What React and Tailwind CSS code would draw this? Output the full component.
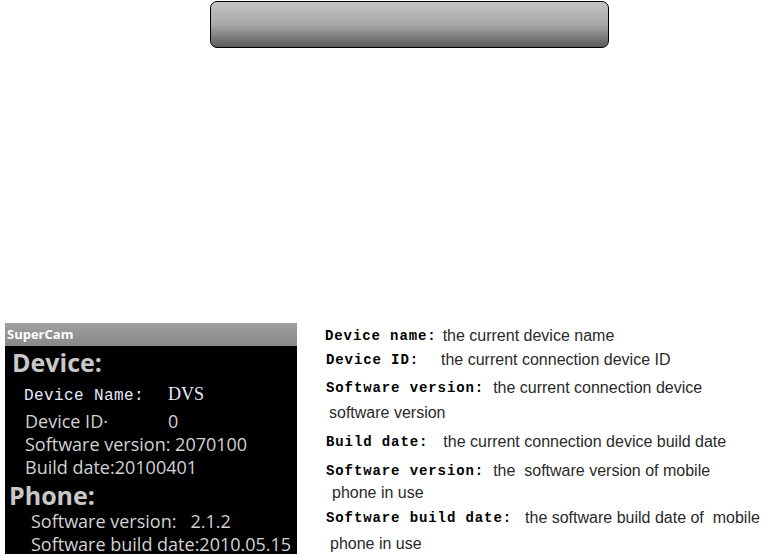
export default function App() {
  const phoneFont = { fontFamily: '"Open Sans", "Noto Sans", sans-serif' };
  const rows = [
    { label: "Device name:", desc: "the current device name", gap: "ml-[6px]", mt: "mt-[3px]" },
    { label: "Device ID:", desc: "the current connection device ID", gap: "ml-[22px]", mt: "mt-[4px]", pl: "pl-px" },
    { label: "Software version:", desc: "the current connection device", gap: "ml-[9px]", mt: "mt-[8px]", pl: "pl-px" },
    { desc: "software version", mt: "mt-[5px]", pl: "pl-[4px]" },
    { label: "Build date:", desc: "the current connection device build date", gap: "ml-[15px]", mt: "mt-[9px]", pl: "pl-px" },
    { label: "Software version:", desc: "the  software version of mobile", gap: "ml-[9px]", mt: "mt-[9px]", pl: "pl-px" },
    { desc: "phone in use", mt: "mt-[2px]", pl: "pl-[7px]" },
    { label: "Software build date:", desc: "the software build date of  mobile", gap: "ml-[13px]", mt: "mt-[5px]", pl: "pl-px" },
    { desc: "phone in use", mt: "mt-[6px]", pl: "pl-[5px]" },
  ];

  return (
    <div className="w-[768px] h-[554px] bg-white overflow-hidden flex flex-col">
      <div className="pl-[210px] pt-px">
        <div className="w-[399px] h-[47px] rounded-[7px] border-[1.5px] border-black bg-gradient-to-b from-[#c4c4c4] via-[#a8a8a8] to-[#5c5c5c]" />
      </div>

      <div className="flex mt-[275px]">
        <div className="ml-[5px] w-[292px] h-[231px] bg-black flex flex-col overflow-hidden" style={phoneFont}>
          <div className="h-[23px] shrink-0 bg-gradient-to-b from-[#a0a0a0] to-[#888888] flex items-center pl-[2px]">
            <span className="text-[13px] font-bold text-white leading-none">SuperCam</span>
          </div>
          <div className="pl-[7px] text-[#d2d2d2]">
            <div className="text-[25px] font-bold leading-[30px] mt-px text-[#c8c8c8]">Device:</div>
            <div className="flex items-baseline h-[26px] pl-[12px] mt-[4px]">
              <span className="w-[144px] text-[16px] text-[#e6ecff] tracking-[0.4px]" style={{ fontFamily: '"Liberation Mono", monospace' }}>
                Device Name:
              </span>
              <span className="text-[18px] text-[#e6ecff]" style={{ fontFamily: '"Liberation Serif", serif' }}>DVS</span>
            </div>
            <div className="flex items-baseline h-[23px] pl-[13px] text-[18px] leading-[24px] mt-[2px]">
              <span className="w-[143px]">Device ID·</span>
              <span>0</span>
            </div>
            <div className="h-[23px] pl-[13px] text-[18px] leading-[24px]">Software version: 2070100</div>
            <div className="h-[23px] pl-[13px] text-[18px] leading-[24px]">Build date:20100401</div>
            <div className="text-[25px] font-bold leading-[27px] text-[#c8c8c8] ml-[-3px] mt-[4px]">Phone:</div>
            <div className="h-[23px] pl-[19px] text-[18px] leading-[24px] whitespace-pre">Software version:   2.1.2</div>
            <div className="h-[20px] mt-[2px] pl-[19px] text-[18px] leading-[20px]">Software build date:2010.05.15</div>
          </div>
        </div>

        <div className="ml-[28px] flex flex-col">
          {rows.map((r, i) => (
            <div key={i} className={`h-[20px] flex items-center ${r.mt} ${r.pl || ""}`}>
              {r.label && (
                <span
                  className="text-[14px] font-bold text-black tracking-[0.9px]"
                  style={{ fontFamily: '"Liberation Mono", monospace' }}
                >
                  {r.label}
                </span>
              )}
              <span
                className={`text-[16px] text-[#2a2a2a] whitespace-pre ${r.gap || ""}`}
                style={{ fontFamily: '"Liberation Sans", Arial, sans-serif' }}
              >
                {r.desc}
              </span>
            </div>
          ))}
        </div>
      </div>
    </div>
  );
}
